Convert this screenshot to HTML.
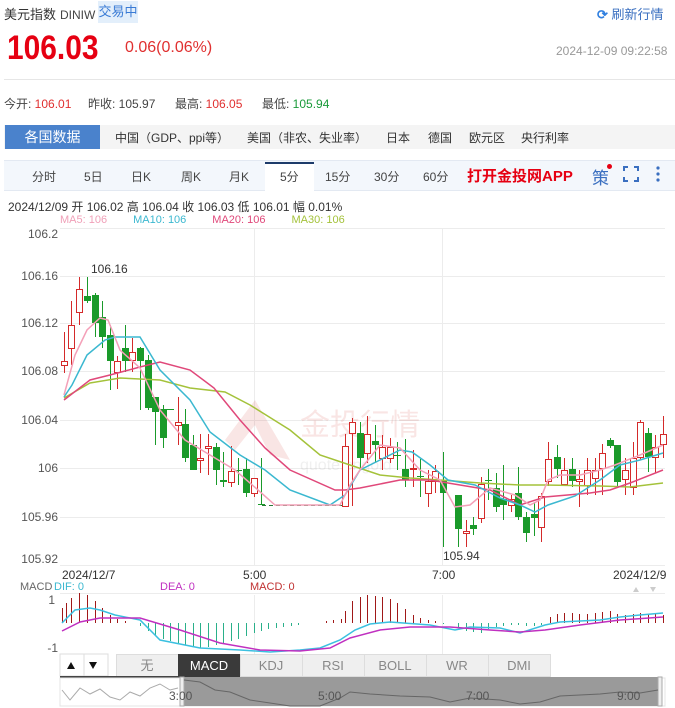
<!DOCTYPE html>
<html><head><meta charset="utf-8"><style>
*{margin:0;padding:0;box-sizing:border-box}
body{width:675px;height:708px;overflow:hidden;background:#fff;font-family:"Liberation Sans","Noto Sans CJK SC",sans-serif;position:relative;color:#333}
.a{position:absolute;white-space:nowrap}
</style></head><body>
<div class="a" style="left:4px;top:4px;font-size:13px;color:#333">美元指数<span style="font-size:12px;color:#444;margin-left:4px">DINIW</span></div>
<div class="a" style="left:98px;top:1px;width:40px;height:22px;background:#e3effb;color:#3a7bd5;font-size:13px;line-height:22px;text-align:center">交易中</div>
<div class="a" style="left:597px;top:4px;font-size:13px;color:#3a6fc0"><span style="color:#2f7fe0;font-weight:bold">⟳</span> 刷新行情</div>
<div class="a" style="left:7px;top:29px;font-size:34px;font-weight:bold;color:#e60012;transform:scaleX(0.88);transform-origin:left top">106.03</div>
<div class="a" style="left:125px;top:39px;font-size:16px;color:#e03030">0.06(0.06%)</div>
<div class="a" style="left:556px;top:44px;font-size:12px;color:#999">2024-12-09 09:22:58</div>
<div class="a" style="left:4px;top:79px;width:671px;height:1px;background:#e6e6e6"></div>
<div class="a" style="left:4px;top:95px;font-size:12px;color:#444">今开: <span style="color:#e03030">106.01</span></div>
<div class="a" style="left:88px;top:95px;font-size:12px;color:#444">昨收: 105.97</div>
<div class="a" style="left:175px;top:95px;font-size:12px;color:#444">最高: <span style="color:#e03030">106.05</span></div>
<div class="a" style="left:262px;top:95px;font-size:12px;color:#444">最低: <span style="color:#1a9a3a">105.94</span></div>
<div class="a" style="left:4px;top:125px;width:671px;height:24px;background:#f4f4f4"></div>
<div class="a" style="left:5px;top:125px;width:95px;height:24px;background:#4a82cc;color:#fff;font-size:14px;line-height:24px;text-align:center">各国数据</div>
<div class="a" style="left:115px;top:129px;font-size:12px;color:#333">中国（GDP、ppi等）</div>
<div class="a" style="left:247px;top:129px;font-size:12px;color:#333">美国（非农、失业率）</div>
<div class="a" style="left:386px;top:129px;font-size:12px;color:#333">日本</div>
<div class="a" style="left:428px;top:129px;font-size:12px;color:#333">德国</div>
<div class="a" style="left:469px;top:129px;font-size:12px;color:#333">欧元区</div>
<div class="a" style="left:521px;top:129px;font-size:12px;color:#333">央行利率</div>
<div class="a" style="left:4px;top:160px;width:671px;height:31px;background:#f3f7fc;border-top:1px solid #e3e9f2;border-bottom:1px solid #e3e9f2"></div>
<div class="a" style="left:265px;top:162px;width:49px;height:29px;background:#fff;border-top:2px solid #1d3b6a"></div>
<div class="a" style="left:0;top:168px;font-size:12px;color:#444;width:460px">
<span class="a" style="left:32px">分时</span><span class="a" style="left:84px">5日</span><span class="a" style="left:131px">日K</span><span class="a" style="left:181px">周K</span><span class="a" style="left:229px">月K</span><span class="a" style="left:280px">5分</span><span class="a" style="left:325px">15分</span><span class="a" style="left:374px">30分</span><span class="a" style="left:423px">60分</span></div>
<div class="a" style="left:467px;top:165px;font-size:15px;font-weight:bold;color:#e60012">打开金投网APP</div>
<div class="a" style="left:592px;top:164px;font-size:17px;color:#3a6fc0">策</div>
<div class="a" style="left:607px;top:164px;width:5px;height:5px;border-radius:3px;background:#e60012"></div>
<svg class="a" style="left:623px;top:166px" width="16" height="16"><path d="M1 5V1H5M11 1H15V5M15 11V15H11M5 15H1V11" fill="none" stroke="#3a6fc0" stroke-width="2"/></svg>
<svg class="a" style="left:655px;top:165px" width="6" height="18"><circle cx="3" cy="3" r="1.6" fill="#3a6fc0"/><circle cx="3" cy="9" r="1.6" fill="#3a6fc0"/><circle cx="3" cy="15" r="1.6" fill="#3a6fc0"/></svg>
<div class="a" style="left:8px;top:198px;font-size:12px;color:#333">2024/12/09 开 106.02 高 106.04 收 106.03 低 106.01 幅 0.01%</div>
<div class="a" style="left:60px;top:214px;font-size:11px"><span style="color:#f0a0b8">MA5: 106</span><span style="color:#3bb8d0;margin-left:26px">MA10: 106</span><span style="color:#e0487a;margin-left:26px">MA20: 106</span><span style="color:#a4c23a;margin-left:26px">MA30: 106</span></div>

<svg id="ch" class="a" style="left:0;top:0" width="675" height="708" font-family="Liberation Sans,sans-serif">
<g stroke="#ececec" stroke-width="1">
<line x1="60" y1="228.5" x2="665" y2="228.5"/>
<line x1="60" y1="276.5" x2="665" y2="276.5"/><line x1="60" y1="323.5" x2="665" y2="323.5"/>
<line x1="60" y1="371.5" x2="665" y2="371.5"/><line x1="60" y1="420.5" x2="665" y2="420.5"/>
<line x1="60" y1="468.5" x2="665" y2="468.5"/><line x1="60" y1="517.5" x2="665" y2="517.5"/>
<line x1="60" y1="565.5" x2="665" y2="565.5"/>
<line x1="254.5" y1="228" x2="254.5" y2="565"/><line x1="442.5" y1="228" x2="442.5" y2="565"/>
<line x1="254.5" y1="595" x2="254.5" y2="655"/><line x1="442.5" y1="595" x2="442.5" y2="655"/>
<line x1="60" y1="593.5" x2="665" y2="593.5"/>
</g>
<g font-size="12" fill="#555" text-anchor="end">
<text x="58" y="238">106.2</text><text x="58" y="280">106.16</text><text x="58" y="327">106.12</text><text x="58" y="375">106.08</text><text x="58" y="424">106.04</text><text x="58" y="472">106</text><text x="58" y="521">105.96</text><text x="58" y="563">105.92</text>
</g>
<g opacity="0.12" fill="#d0302a"><path d="M225 440L255 400L290 460L270 455L255 425L235 450Z"/><text x="300" y="435" font-size="30" font-family="Noto Sans CJK SC,sans-serif">金投行情</text><text x="300" y="470" font-size="16" fill="#888">quote.cngold</text></g>
<line x1="262" y1="505.5" x2="343" y2="505.5" stroke="#2a7a3a" stroke-dasharray="4,3"/>
<g id="cd"></g>
<g fill="none" stroke-width="1.5">
<polyline stroke="#a4c23a" points="64,398 90,383 120,378 160,380 190,388 225,392 250,405 290,430 320,455 350,465 380,475 410,478 440,480 480,483 520,485 545,485 600,486 630,487 663,483"/>
<polyline stroke="#e0487a" points="64,400 90,380 110,375 140,367 160,362 190,370 214,388 240,420 265,448 290,470 335,490 345,490 360,488 400,480 430,480 460,485 490,490 520,505 545,497 590,493 610,490 630,483 663,470"/>
<polyline stroke="#3bb8d0" points="64,397 72,385 87,355 105,340 115,337 140,337 160,370 190,400 210,432 240,455 265,470 290,490 330,505 345,495 360,470 380,460 400,450 412,452 430,465 448,480 475,485 500,498 520,505 535,512 548,505 575,496 600,480 620,465 640,460 663,453"/>
<polyline stroke="#f4a0b8" points="64,395 75,355 87,330 100,318 108,320 120,350 140,368 160,410 185,440 210,455 235,470 258,490 275,505 340,505 350,485 360,470 380,445 400,448 420,470 440,480 455,507 470,505 490,488 515,495 530,505 540,500 548,480 560,475 580,475 600,470 615,465 640,455 663,445"/>
</g>
<text x="91" y="273" font-size="12" fill="#333">106.16</text>
<text x="443" y="560" font-size="12" fill="#333">105.94</text>
<g font-size="12" fill="#333"><text x="62" y="579">2024/12/7</text><text x="243" y="579">5:00</text><text x="432" y="579">7:00</text><text x="613" y="579">2024/12/9</text></g>
<g font-size="11"><text x="20" y="590" fill="#666">MACD</text><text x="54" y="590" fill="#3bb8d0">DIF: 0</text><text x="160" y="590" fill="#c030c0">DEA: 0</text><text x="250" y="590" fill="#c03030">MACD: 0</text></g>
<g fill="#ccc"><path d="M633 592l3-5 3 5z"/><path d="M650 587l3 5 3-5z"/></g>
<text x="55" y="604" font-size="12" fill="#555" text-anchor="end">1</text>
<text x="58" y="652" font-size="12" fill="#555" text-anchor="end">-1</text>
<g id="mh"></g>
<g fill="none" stroke-width="1.5">
<polyline stroke="#3bc0e0" points="62,623 75,610 90,608 100,610 115,615 140,620 160,640 200,648 240,650 270,652 300,650 320,648 340,640 355,630 370,624 390,622 430,625 455,630 470,627 500,628 520,633 545,625 560,622 600,620 620,617 640,615 663,613"/>
<polyline stroke="#c030c0" points="62,631 80,622 100,618 140,618 180,630 220,643 260,650 300,651 330,648 350,638 380,630 410,627 450,627 490,630 520,632 545,630 580,625 620,620 663,617"/>
</g>
<rect x="60" y="654" width="48" height="22" fill="#fff" stroke="#ddd"/><line x1="84" y1="654" x2="84" y2="676" stroke="#ddd"/>
<path d="M67 669l4-7 4 7z M89 662l4 7 4-7z" fill="#111"/>
<g stroke="#ddd" fill="#efefef">
<rect x="116.5" y="654.5" width="62" height="22"/><rect x="178.5" y="654.5" width="62" height="22" fill="#3a3a3a" stroke="#3a3a3a"/><rect x="240.5" y="654.5" width="62" height="22"/><rect x="302.5" y="654.5" width="62" height="22"/><rect x="364.5" y="654.5" width="62" height="22"/><rect x="426.5" y="654.5" width="62" height="22"/><rect x="488.5" y="654.5" width="62" height="22"/></g>
<g font-size="13" text-anchor="middle" fill="#888"><text x="147" y="670">无</text><text x="209" y="670" fill="#fff">MACD</text><text x="271" y="670">KDJ</text><text x="333" y="670">RSI</text><text x="395" y="670">BOLL</text><text x="457" y="670">WR</text><text x="519" y="670">DMI</text></g>
<rect x="60" y="676" width="120" height="2" fill="#444"/>
<rect x="60" y="678" width="605" height="28" fill="#fff" stroke="#e4e4e4"/>
<rect x="183" y="677" width="477" height="29" fill="#9a9a9a"/>
<rect x="180" y="677" width="4" height="29" fill="#eee" stroke="#aaa"/><rect x="658" y="677" width="4" height="29" fill="#eee" stroke="#aaa"/>
<polyline fill="none" stroke="#aaa" points="62,690 70,700 80,688 90,694 100,689 110,697 120,700 130,692 140,696 150,688 160,684 170,690 178,688"/>
<polyline fill="none" stroke="#666" points="184,680 200,682 215,690 230,692 250,700 270,703 290,706 320,706 340,698 350,692 370,694 400,696 430,697 450,702 470,698 500,700 520,704 540,702 560,696 600,694 620,692 640,693 658,690"/>
<g font-size="12" fill="#555"><text x="169" y="700">3:00</text><text x="318" y="700">5:00</text><text x="466" y="700">7:00</text><text x="617" y="700">9:00</text></g>
</svg>
<script>
var D=[[64,361,365,332,373,1],[71,325,348,301,365,1],[79,289,312,277,325,1],[87,296,301,277,303,0],[95,295,323,293,337,0],[102,317,337,301,348,0],[110,335,361,325,390,0],[117,361,372,356,389,1],[125,348,361,325,372,0],[132,352,360,338,372,1],[140,348,361,347,410,0],[148,360,408,355,410,0],[155,397,412,397,445,0],[163,409,438,405,448,0],[170,409,410,409,410,0],[178,422,425,397,445,1],[185,424,458,409,462,0],[193,445,470,435,470,0],[200,458,460,434,473,1],[208,446,448,434,475,1],[216,447,470,443,485,0],[223,480,482,452,487,0],[231,471,482,446,487,1],[238,470,471,458,485,0],[246,469,493,458,497,0],[254,478,493,478,497,1],[261,504,505,458,505,0],
[345,446,506,434,506,1],[352,422,433,418,506,1],[360,433,458,422,469,0],[367,434,453,416,463,1],[375,441,445,425,463,0],[382,447,458,435,470,1],[390,447,458,438,463,1],[397,455,456,442,470,0],[405,469,480,439,487,0],[413,468,469,450,487,1],[420,476,477,459,497,0],[428,481,493,470,507,1],[435,471,481,465,493,1],[443,481,493,452,547,0],[458,495,529,495,547,0],[466,531,533,520,547,1],[473,525,529,517,535,0],[481,484,518,477,523,1],[488,480,481,469,500,0],[496,488,507,473,512,0],[503,499,505,465,520,0],[511,499,505,495,512,1],[518,493,517,467,520,0],[526,517,533,512,542,0],[534,514,518,502,536,0],[541,496,527,493,542,1],[548,459,481,442,486,1],[557,457,469,445,478,0],[564,470,484,458,484,1],[572,469,481,458,487,0],[579,479,481,470,507,1],[587,470,485,458,495,1],[595,470,478,458,495,1],[602,453,468,444,495,1],[610,440,446,438,448,0],[617,445,482,445,487,0],[625,470,479,458,495,1],[633,458,487,442,495,1],[640,422,457,420,460,1],[648,433,457,428,472,0],[655,447,457,435,473,1],[663,434,444,416,458,1]];
var s='';D.forEach(function(d){var c=d[5]?'#d42a2a':'#1a9a2a';var x=d[0];s+='<line x1="'+(x+.5)+'" y1="'+d[3]+'" x2="'+(x+.5)+'" y2="'+d[4]+'" stroke="'+c+'"/>';var h=Math.max(1,d[2]-d[1]);if(d[5])s+='<rect x="'+(x-2.5)+'" y="'+(d[1]+.5)+'" width="6" height="'+h+'" fill="#fff" stroke="'+c+'"/>';else s+='<rect x="'+(x-3)+'" y="'+d[1]+'" width="7" height="'+h+'" fill="'+c+'"/>';});
document.getElementById('cd').innerHTML=s;
var H=[[62,15],[66,20],[71,25],[79,30],[87,28],[95,22],[102,15],[110,8],[117,4],[125,2],[140,-3],[148,-8],[155,-13],[163,-16],[170,-18],[178,-20],[185,-22],[193,-24],[200,-25],[208,-24],[216,-22],[223,-20],[231,-18],[238,-16],[246,-13],[254,-10],[261,-8],[268,-6],[276,-5],[283,-4],[291,-3],[298,-2],[326,2],[333,3],[341,4],[345,12],[352,22],[360,26],[367,28],[375,27],[382,26],[390,24],[397,20],[405,14],[413,8],[420,5],[428,3],[435,2],[443,-1],[458,-5],[466,-8],[473,-9],[481,-10],[488,-6],[496,-4],[503,-3],[511,-2],[518,-2],[526,-3],[534,-3],[541,-2],[550,6],[557,9],[564,10],[572,10],[579,9],[587,9],[595,10],[602,11],[610,12],[617,9],[625,8],[633,9],[640,10],[648,9],[655,9],[663,8]];
var m='';H.forEach(function(h){var c=h[1]>0?'#a01818':'#2ab08a';var y=623,y2=623-h[1];m+='<line x1="'+(h[0]+.5)+'" y1="'+y+'" x2="'+(h[0]+.5)+'" y2="'+y2+'" stroke="'+c+'"/>';});
document.getElementById('mh').innerHTML=m;
</script>
</body></html>
